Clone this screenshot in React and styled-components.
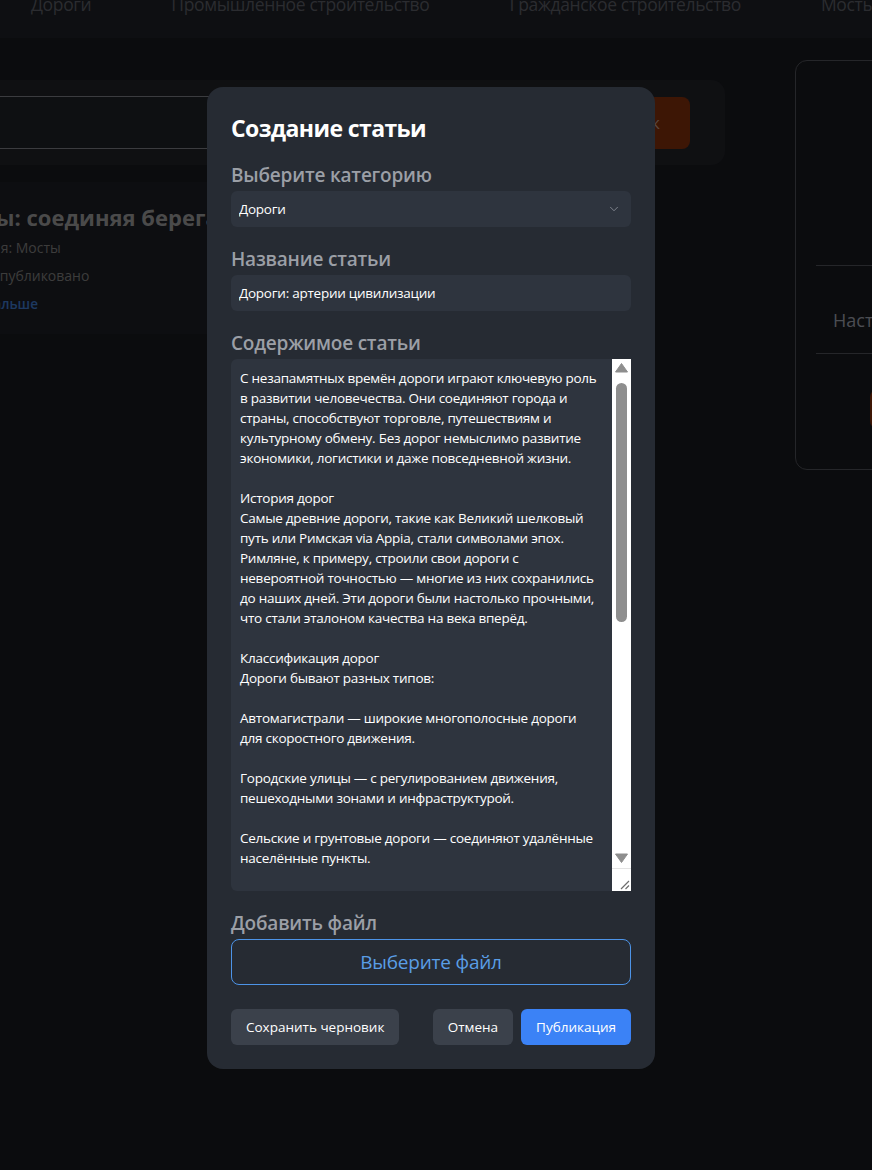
import styled, { createGlobalStyle } from "styled-components";
import { ChevronDown } from "lucide-react";

const GlobalStyle = createGlobalStyle`
  html, body {
    margin: 0;
    padding: 0;
    background: #1c1e23;
    overflow: hidden;
  }
  body {
    font-family: "Open Sans", "Noto Sans", sans-serif;
  }
`;

const Page = styled.div`
  width: 100%;
  height: 1170px;
  overflow: hidden;
  background: #1c1e23;
`;

const Nav = styled.div`
  height: 38px;
  display: flex;
  align-items: flex-end;
  gap: 80px;
  padding-left: 31px;
  background: #23262d;
`;

const NavItem = styled.a`
  font-size: 17.5px;
  line-height: 24px;
  padding-bottom: 22px;
  color: #6c6e78;
  white-space: nowrap;
  letter-spacing: -0.35px;
`;

const Main = styled.div`
  display: flex;
  gap: 70px;
  margin-left: -86px;
  padding-top: 22px;
`;

const LeftCol = styled.div`
  width: 811px;
  flex-shrink: 0;
  display: flex;
  flex-direction: column;
  align-items: flex-start;
  gap: 17px;
  padding-top: 20px;
`;

const SearchPanel = styled.div`
  align-self: stretch;
  display: flex;
  gap: 12px;
  padding: 16px 35px 16px 16px;
  border-radius: 14px;
  background: #26282f;
`;

const SearchInput = styled.div`
  flex: 1;
  height: 51px;
  background: #23282f;
  border: 1px solid #94979e;
  border-radius: 4px;
`;

const SearchButton = styled.button`
  width: 130px;
  height: 52px;
  margin-top: 1px;
  padding: 0 0 0 22px;
  border: none;
  border-radius: 8px;
  background: #99370d;
  color: #e0b8a4;
  font-family: inherit;
  font-size: 16px;
`;

const ArticleCard = styled.div`
  width: 600px;
  padding: 20px 24px 16px;
  border-radius: 12px;
  background: #21232b;
`;

const CardTitle = styled.h3`
  margin: 0 0 2px;
  font-size: 22px;
  line-height: 30px;
  font-weight: 700;
  color: #b9b9b9;
  white-space: nowrap;
`;

const CardMeta = styled.div`
  font-size: 14px;
  line-height: 28px;
  color: #969696;
`;

const CardLink = styled.a`
  display: block;
  font-size: 13.5px;
  line-height: 28px;
  font-weight: 600;
  word-spacing: -5px;
  color: #4a90f0;
`;

const RightCard = styled.div`
  width: 300px;
  flex-shrink: 0;
  height: 410px;
  box-sizing: border-box;
  padding: 0 20px;
  border: 1px solid #5d5f66;
  border-radius: 12px;
`;

const ProfileArea = styled.div`
  height: 204px;
  border-bottom: 1px solid #5d5f66;
`;

const MenuItem = styled.div`
  height: 88px;
  box-sizing: border-box;
  display: flex;
  align-items: flex-end;
  padding: 0 0 20px 17px;
  font-size: 18px;
  line-height: 26px;
  color: #bbc0cd;
  border-bottom: 1px solid #5d5f66;
`;

const RightButton = styled.div`
  margin: 35px 0 0 54px;
  height: 40px;
  border-radius: 8px;
  background: #99370d;
`;

const Overlay = styled.div`
  position: fixed;
  inset: 0;
  display: flex;
  justify-content: center;
  align-items: flex-start;
  padding: 87px 10px 0 0;
  background: rgba(0, 0, 0, 0.6);
`;

const Modal = styled.div`
  width: 448px;
  box-sizing: border-box;
  padding: 24px;
  border-radius: 16px;
  background: #262b33;
  display: flex;
  flex-direction: column;
`;

const Title = styled.h2`
  margin: 0;
  padding-top: 3px;
  font-size: 23px;
  line-height: 29px;
  font-weight: 700;
  color: #ffffff;
  letter-spacing: -0.6px;
`;

const Label = styled.label`
  display: block;
  margin: 20px 0 4px;
  font-size: 19px;
  line-height: 24px;
  font-weight: 600;
  color: #9b9fa6;
  letter-spacing: -0.2px;
`;

const SelectWrap = styled.div`
  position: relative;
  color: #8a8f98;

  svg {
    position: absolute;
    right: 10px;
    top: 11px;
    pointer-events: none;
  }
`;

const fieldBase = `
  width: 100%;
  box-sizing: border-box;
  border: none;
  outline: none;
  border-radius: 6px;
  background: #2e343e;
  color: #ffffff;
  font-family: "Open Sans", "Noto Sans", sans-serif;
  font-size: 13.5px;
  letter-spacing: -0.25px;
`;

const Select = styled.select`
  ${fieldBase}
  height: 36px;
  padding: 0 8px;
  appearance: none;
`;

const Input = styled.input`
  ${fieldBase}
  height: 36px;
  padding: 0 8px;
`;

const ContentField = styled.div`
  display: flex;
  height: 532px;
  border-radius: 6px 0 0 6px;
  overflow: hidden;
  background: #2e343e;
`;

const TextArea = styled.textarea`
  ${fieldBase}
  flex: 1;
  height: 100%;
  padding: 9px 4px 9px 9px;
  line-height: 20px;
  resize: none;
  overflow: hidden;
  border-radius: 0;
  background: transparent;
`;

const ScrollBar = styled.div`
  width: 19px;
  flex-shrink: 0;
  display: flex;
  flex-direction: column;
  background: #ffffff;
  color: #8e8e8e;
`;

const ScrollArrow = styled.div`
  height: ${(p) => p.$h}px;
  display: flex;
  align-items: center;
  justify-content: center;
`;

const ScrollTrack = styled.div`
  flex: 1;
  padding: 6px 4px 0;
`;

const ScrollThumb = styled.div`
  height: 239px;
  border-radius: 6px;
  background: #8e8e8e;
`;

const Resizer = styled.div`
  height: 22px;
  border-top: 1px solid #e4e4e4;
  display: flex;
  align-items: flex-end;
  justify-content: flex-end;
`;

const FileButton = styled.button`
  height: 46px;
  border: 1px solid #4d94e8;
  border-radius: 8px;
  background: transparent;
  color: #5a9ee6;
  font-family: inherit;
  font-size: 19px;
  letter-spacing: -0.2px;
`;

const Footer = styled.div`
  display: flex;
  align-items: center;
  margin-top: 24px;
`;

const Actions = styled.div`
  display: flex;
  gap: 8px;
  margin-left: auto;
`;

const Button = styled.button`
  height: 36px;
  padding: 0 15px;
  border: none;
  border-radius: 6px;
  background: ${(p) => (p.$primary ? "#3b82f6" : "#3b414b")};
  color: #ffffff;
  font-family: inherit;
  font-size: 13.5px;
`;

const Triangle = ({ down }) => (
  <svg width="13" height="10" viewBox="0 0 13 10">
    <path
      d={down ? "M0.5 1 L12.5 1 L6.5 9.5 Z" : "M0.5 9 L12.5 9 L6.5 0.5 Z"}
      fill="currentColor"
      strokeLinejoin="round"
      stroke="currentColor"
      strokeWidth="1"
    />
  </svg>
);

const Grip = () => (
  <svg width="14" height="14" viewBox="0 0 14 14">
    <path d="M12 4 L4 12 M12 8.5 L8.5 12" stroke="#6e6e6e" strokeWidth="1.2" />
  </svg>
);

const content = `С незапамятных времён дороги играют ключевую роль
в развитии человечества. Они соединяют города и
страны, способствуют торговле, путешествиям и
культурному обмену. Без дорог немыслимо развитие
экономики, логистики и даже повседневной жизни.

История дорог
Самые древние дороги, такие как Великий шелковый
путь или Римская via Appia, стали символами эпох.
Римляне, к примеру, строили свои дороги с
невероятной точностью — многие из них сохранились
до наших дней. Эти дороги были настолько прочными,
что стали эталоном качества на века вперёд.

Классификация дорог
Дороги бывают разных типов:

Автомагистрали — широкие многополосные дороги
для скоростного движения.

Городские улицы — с регулированием движения,
пешеходными зонами и инфраструктурой.

Сельские и грунтовые дороги — соединяют удалённые
населённые пункты.

Технологии строительства
Современные дороги строятся в несколько слоёв:
основание, подстилающий слой и покрытие из
асфальтобетона или цементобетона. Важную роль
играют водоотвод и правильный уклон полотна.

Безопасность на дорогах
Разметка, знаки, освещение и ограждения помогают
снизить число аварий. Умные системы управления
движением анализируют потоки транспорта и
меняют режим светофоров в реальном времени.

Будущее дорог
Инженеры разрабатывают покрытия, которые
вырабатывают электроэнергию, самовосстанавливаются
и заряжают электромобили прямо во время движения.

Заключение
Дороги — это не просто полосы асфальта, а артерии
цивилизации, по которым движутся люди, товары и
идеи. Их развитие определяет будущее городов и
целых стран.
`;

export default function App() {
  return (
    <>
      <GlobalStyle />
      <Page>
        <Nav>
          <NavItem>Дороги</NavItem>
          <NavItem>Промышленное строительство</NavItem>
          <NavItem>Гражданское строительство</NavItem>
          <NavItem>Мосты</NavItem>
        </Nav>
        <Main>
          <LeftCol>
            <SearchPanel>
              <SearchInput />
              <SearchButton>Поиск</SearchButton>
            </SearchPanel>
            <ArticleCard>
              <CardTitle>Мосты: соединяя берега и эпохи</CardTitle>
              <CardMeta>Категория: Мосты</CardMeta>
              <CardMeta>Статус: Опубликовано</CardMeta>
              <CardLink>Читать дальше</CardLink>
            </ArticleCard>
          </LeftCol>
          <RightCard>
            <ProfileArea />
            <MenuItem>Настройки</MenuItem>
            <RightButton />
          </RightCard>
        </Main>
      </Page>
      <Overlay>
        <Modal>
          <Title>Создание статьи</Title>
          <Label>Выберите категорию</Label>
          <SelectWrap>
            <Select defaultValue="roads">
              <option value="roads">Дороги</option>
              <option value="industrial">Промышленное строительство</option>
              <option value="civil">Гражданское строительство</option>
              <option value="bridges">Мосты</option>
            </Select>
            <ChevronDown size={14} strokeWidth={1.5} />
          </SelectWrap>
          <Label>Название статьи</Label>
          <Input defaultValue="Дороги: артерии цивилизации" />
          <Label>Содержимое статьи</Label>
          <ContentField>
            <TextArea defaultValue={content} />
            <ScrollBar>
              <ScrollArrow $h={18}>
                <Triangle />
              </ScrollArrow>
              <ScrollTrack>
                <ScrollThumb />
              </ScrollTrack>
              <ScrollArrow $h={20}>
                <Triangle down />
              </ScrollArrow>
              <Resizer>
                <Grip />
              </Resizer>
            </ScrollBar>
          </ContentField>
          <Label>Добавить файл</Label>
          <FileButton>Выберите файл</FileButton>
          <Footer>
            <Button>Сохранить черновик</Button>
            <Actions>
              <Button>Отмена</Button>
              <Button $primary>Публикация</Button>
            </Actions>
          </Footer>
        </Modal>
      </Overlay>
    </>
  );
}
